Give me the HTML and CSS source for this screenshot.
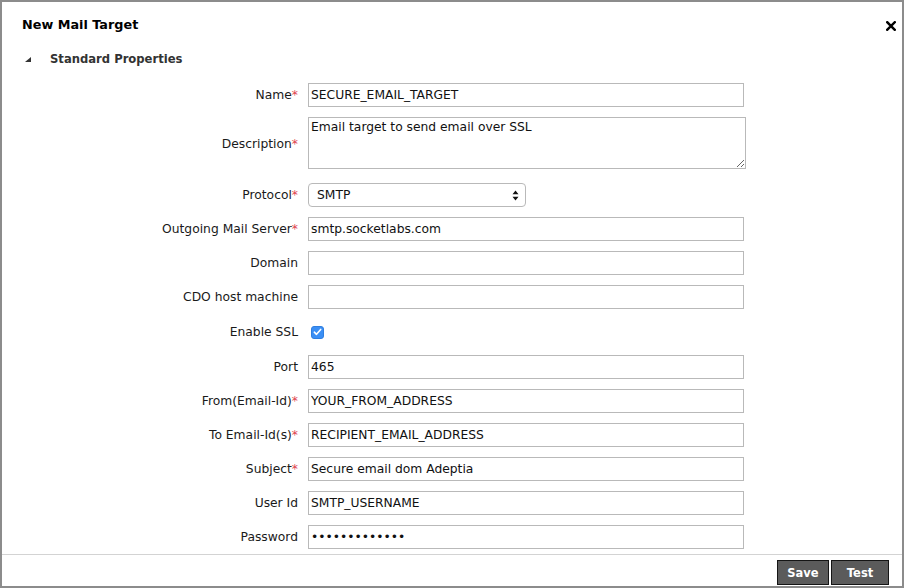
FILE: index.html
```html
<!DOCTYPE html>
<html>
<head>
<meta charset="utf-8">
<title>New Mail Target</title>
<link rel="stylesheet" href="styles.css">
</head>
<body>
<div class="dialog">
  <div class="dialog-header">
    <div class="dialog-title">New Mail Target</div>
    <div class="close-btn" aria-label="Close">
      <svg width="10" height="10" viewBox="0 0 10 10"><path d="M1.2 1.2 L8.8 8.8 M8.8 1.2 L1.2 8.8" stroke="#000" stroke-width="2.4" stroke-linecap="square" fill="none"/></svg>
    </div>
  </div>
  <div class="section-header">
    <svg class="caret" width="6" height="6" viewBox="0 0 6 6"><path d="M6 0 L6 5 L0 5 Z" fill="#333"/></svg>
    <span class="section-title">Standard Properties</span>
  </div>
  <div class="form">
    <div class="row">
      <label class="label">Name<span class="req">*</span></label>
      <input class="field" type="text" value="SECURE_EMAIL_TARGET" readonly>
    </div>
    <div class="row row-desc">
      <label class="label">Description<span class="req">*</span></label>
      <textarea class="field area" readonly>Email target to send email over SSL</textarea>
    </div>
    <div class="row">
      <label class="label">Protocol<span class="req">*</span></label>
      <div class="select">
        <span>SMTP</span>
        <svg width="7" height="11" viewBox="0 0 7 11"><path d="M3.5 0.5 L6.5 4.3 L0.5 4.3 Z M3.5 10.5 L6.5 6.7 L0.5 6.7 Z" fill="#111"/></svg>
      </div>
    </div>
    <div class="row">
      <label class="label">Outgoing Mail Server<span class="req">*</span></label>
      <input class="field" type="text" value="smtp.socketlabs.com" readonly>
    </div>
    <div class="row">
      <label class="label">Domain</label>
      <input class="field" type="text" value="" readonly>
    </div>
    <div class="row">
      <label class="label">CDO host machine</label>
      <input class="field" type="text" value="" readonly>
    </div>
    <div class="row row-check">
      <label class="label">Enable SSL</label>
      <span class="checkbox">
        <svg width="9" height="8" viewBox="0 0 9 8"><path d="M1.3 4.2 L3.5 6.3 L7.7 1.4" stroke="#fff" stroke-width="1.6" fill="none" stroke-linecap="round" stroke-linejoin="round"/></svg>
      </span>
    </div>
    <div class="row">
      <label class="label">Port</label>
      <input class="field" type="text" value="465" readonly>
    </div>
    <div class="row">
      <label class="label">From(Email-Id)<span class="req">*</span></label>
      <input class="field" type="text" value="YOUR_FROM_ADDRESS" readonly>
    </div>
    <div class="row">
      <label class="label">To Email-Id(s)<span class="req">*</span></label>
      <input class="field" type="text" value="RECIPIENT_EMAIL_ADDRESS" readonly>
    </div>
    <div class="row">
      <label class="label">Subject<span class="req">*</span></label>
      <input class="field" type="text" value="Secure email dom Adeptia" readonly>
    </div>
    <div class="row">
      <label class="label">User Id</label>
      <input class="field" type="text" value="SMTP_USERNAME" readonly>
    </div>
    <div class="row">
      <label class="label">Password</label>
      <input class="field" type="password" value="abcdefghijklm" readonly>
    </div>
  </div>
  <div class="dialog-footer">
    <button class="btn btn-save">Save</button>
    <button class="btn btn-test">Test</button>
  </div>
</div>
</body>
</html>
```

FILE: styles.css
```css
* { box-sizing: border-box; }
html, body { margin: 0; padding: 0; background: #9a9a9a; }
body {
  font-family: "DejaVu Sans", Verdana, sans-serif;
  font-size: 12.3px;
  color: #1a1a1a;
}
.dialog {
  width: 904px;
  height: 588px;
  border: 2px solid #8c8c8c;
  background: #fff;
  display: flex;
  flex-direction: column;
}
.dialog-header {
  display: flex;
  align-items: center;
  justify-content: space-between;
  padding: 12px 6px 0 20px;
  height: 34px;
}
.dialog-title {
  font-weight: bold;
  font-size: 12.8px;
  line-height: 20px;
  color: #000;
}
.close-btn {
  width: 10px;
  height: 10px;
  display: flex;
  margin-top: 2px;
}
.section-header {
  display: flex;
  align-items: center;
  height: 33px;
  padding: 13px 0 0 23px;
  line-height: 20px;
}
.caret { margin-top: 1px; }
.section-title {
  margin-left: 19px;
  font-weight: bold;
  font-size: 11.6px;
  color: #333;
}
.form {
  flex: 1;
  display: flex;
  flex-direction: column;
  gap: 10px;
  padding-top: 14px;
}
.row {
  display: grid;
  grid-template-columns: 296px auto;
  column-gap: 10px;
  align-items: center;
  height: 24px;
}
.row-desc {
  height: 52px;
  margin-bottom: 4px;
  align-items: start;
}
.row-desc .label { margin-top: 19px; }
.row-check { height: 26px; }
.label {
  text-align: right;
  white-space: nowrap;
  line-height: 16px;
}
.req { color: #e0454f; }
.field {
  width: 436px;
  height: 24px;
  border: 1px solid #b9b9b9;
  border-radius: 0;
  padding: 0 2px;
  font-family: "DejaVu Sans", Verdana, sans-serif;
  font-size: 12.3px;
  color: #111;
  background: #fff;
  outline: none;
  margin: 0;
}
.area {
  width: 438px;
  height: 52px;
  padding: 2px 2px;
  resize: vertical;
  line-height: 15px;
}
.select {
  width: 218px;
  height: 24px;
  border: 1px solid #b9b9b9;
  border-radius: 4px;
  display: flex;
  align-items: center;
  justify-content: space-between;
  padding: 0 6px 0 8px;
  color: #111;
}
.select svg { display: block; }
.checkbox {
  width: 13px;
  height: 13px;
  margin-left: 3px;
  border-radius: 3px;
  background: #3b8ff5;
  border: 1px solid #2f7fe0;
  display: flex;
  align-items: center;
  justify-content: center;
}
.checkbox svg { display: block; }
.dialog-footer {
  border-top: 1px solid #d3d3d3;
  height: 32px;
  display: flex;
  justify-content: flex-end;
  align-items: flex-start;
  gap: 2px;
  padding: 5px 13px 0 0;
}
.btn {
  height: 25px;
  background: #5b5b5b;
  border: 1px solid #151515;
  color: #fff;
  font-family: "DejaVu Sans", Verdana, sans-serif;
  font-weight: bold;
  font-size: 11.5px;
  padding: 0;
  margin: 0;
}
.btn-save { width: 52px; }
.btn-test { width: 58px; }
```
